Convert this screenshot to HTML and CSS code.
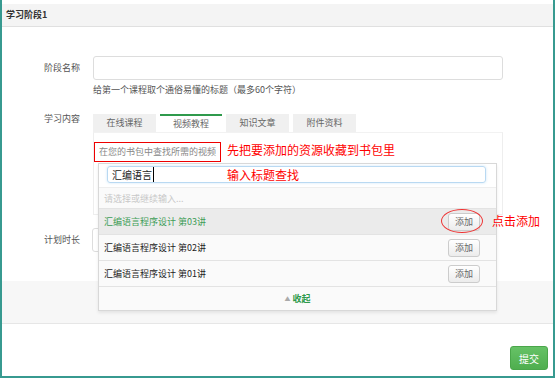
FILE: index.html
```html
<!DOCTYPE html>
<html lang="zh-CN">
<head>
    <meta charset="UTF-8">
    <title>学习阶段</title>
    <link rel="stylesheet" href="styles.css">
</head>
<body>
<div class="panel">
    <div class="panel-head">学习阶段1</div>
    <div class="panel-body">
        <div class="form-row">
            <label class="row-label">阶段名称</label>
            <div class="row-control">
                <input type="text" class="text-input">
                <div class="help">给第一个课程取个通俗易懂的标题（最多60个字符）</div>
            </div>
        </div>

        <div class="form-row content-row">
            <label class="row-label">学习内容</label>
            <div class="row-control">
                <ul class="tabs">
                    <li>在线课程</li>
                    <li class="active">视频教程</li>
                    <li>知识文章</li>
                    <li>附件资料</li>
                </ul>
                <div class="tab-pane">
                    <span class="hint">在您的书包中查找所需的视频</span>

                    <div class="chosen-drop">
                        <div class="chosen-search">
                            <div class="search-box"><span class="typed">汇编语言</span></div>
                        </div>
                        <ul class="chosen-results">
                            <li class="placeholder">请选择或继续输入...</li>
                            <li class="highlighted">汇编语言程序设计 第03讲<span class="add-btn">添加</span></li>
                            <li>汇编语言程序设计 第02讲<span class="add-btn">添加</span></li>
                            <li>汇编语言程序设计 第01讲<span class="add-btn">添加</span></li>
                        </ul>
                        <div class="chosen-collapse"><span class="arrow">▲</span>收起</div>
                    </div>

                    <!-- 标注 -->
                    <span class="note note-bag">先把要添加的资源收藏到书包里</span>
                    <span class="note note-search">输入标题查找</span>
                    <span class="note-ring"></span>
                    <span class="note note-add">点击添加</span>
                </div>
            </div>
        </div>

        <div class="form-row plan-row">
            <label class="row-label">计划时长</label>
            <div class="row-control">
                <input type="text" class="text-input short">
            </div>
        </div>

        <div class="gray-band"></div>

        <div class="form-actions">
            <button type="submit" class="submit-btn">提交</button>
        </div>
    </div>
</div>
</body>
</html>
```

FILE: styles.css
```css
:root {
    --teal: #379a90; --green: #2f9a4c; --border: #e3e3e3; --text: #333;
    --font: "Noto Sans CJK SC", "Noto Sans", sans-serif;
}
body { margin: 0; font-family: var(--font); color: var(--text); background: #fff; }
.panel { height: 378px; box-sizing: border-box; border: 2px solid var(--teal); border-top: 0; padding-top: 4px; }
.panel-head { height: 22px; line-height: 22px; padding-left: 4px; background: #f4f4f4; border-bottom: 1px solid #e0e0e0; font-size: 9px; font-weight: 700; }
.panel-body { padding-top: 29px; }

.form-row { display: grid; grid-template-columns: 91px 410px; }
.row-label { padding-right: 13px; text-align: right; font-size: 9px; color: #555; }
.form-row:first-child .row-label { line-height: 24px; }
.text-input { display: block; width: 410px; height: 24px; box-sizing: border-box; margin: 0; border: 1px solid #ddd; border-radius: 3px; background: #fff; }
.text-input.short { width: 130px; margin-left: -1px; }
.help { margin-top: 4px; font-size: 9px; line-height: 12px; color: #555; }

.content-row { margin-top: 18px; }
.content-row .row-label { line-height: 10px; }
.tabs { display: flex; gap: 4px; margin: 0; padding: 0; list-style: none; }
.tabs li { width: 63px; height: 18px; line-height: 18px; text-align: center; font-size: 9px; color: #666; background: #f0f0f0; }
.tabs li.active { box-sizing: border-box; background: #fff; border-top: 2px solid var(--green); line-height: 16px; width: 62px; }
.tab-pane { position: relative; height: 83px; box-sizing: border-box; border: 1px solid #eee; border-top-color: #f2f2f2; }
.hint { display: inline-block; margin-top: 9px; padding: 0 4px; height: 18px; line-height: 18px; border: 1px solid #e00; font-size: 9px; color: #888; white-space: nowrap; }

.chosen-drop { position: absolute; left: 4px; top: 30px; width: 399px; box-sizing: border-box; border: 1px solid #d8d8d8; background: #fafafa; box-shadow: 0 2px 3px rgba(0, 0, 0, 0.08); z-index: 10; }
.chosen-search { padding: 2px 10px 4px 8px; background: #fff; }
.search-box { height: 17px; box-sizing: border-box; padding-left: 4px; border: 1px solid #b9d9f2; border-radius: 3px; box-shadow: 0 0 3px #cfe6f8; font-size: 10px; line-height: 15px; color: #222; }
.typed { border-right: 1px solid #000; padding-right: 1px; }
.chosen-results { margin: 0; padding: 0; list-style: none; }
.chosen-results li { display: flex; align-items: center; justify-content: space-between; height: 25px; padding: 0 16px 0 5px; border-top: 1px solid var(--border); font-size: 9px; color: #222; background: #fafafa; }
.chosen-results li.placeholder { height: 20px; color: #c8c8c8; border-top-color: #eee; }
.chosen-results li.highlighted { background: #ebebeb; color: #3e9d57; }
.add-btn { width: 32px; height: 18px; box-sizing: border-box; line-height: 16px; text-align: center; border: 1px solid #ccc; border-radius: 3px; background: linear-gradient(#fff, #ececec); color: #666; font-size: 9px; }
.chosen-collapse { height: 23px; line-height: 23px; text-align: center; border-top: 1px solid var(--border); font-size: 9px; font-weight: 700; color: var(--green); }
.chosen-collapse .arrow { font-size: 6px; color: #aaa; margin-right: 2px; vertical-align: 1px; }

.note { position: absolute; font-size: 12px; line-height: 14px; color: #f00; white-space: nowrap; z-index: 20; }
.note-bag { left: 133px; top: 10px; }
.note-search { left: 133px; top: 35px; }
.note-add { left: 398px; top: 81px; }
.note-ring { position: absolute; left: 347px; top: 76px; width: 42px; height: 24px; box-sizing: border-box; border: 1px solid #e33; border-radius: 50%; z-index: 20; }

.plan-row { margin-top: 13px; }
.plan-row .row-label { line-height: 24px; }

.gray-band { height: 42px; margin-top: 29px; background: #f7f7f7; border-bottom: 1px solid #e6e6e6; }
.form-actions { display: flex; justify-content: flex-end; padding: 22px 5px 0 0; }
.submit-btn { width: 38px; height: 24px; padding: 0; border: 1px solid #4aa64a; border-radius: 3px; background: linear-gradient(#66c266, #4fae4f); color: #fff; font-family: var(--font); font-size: 10px; }
```
